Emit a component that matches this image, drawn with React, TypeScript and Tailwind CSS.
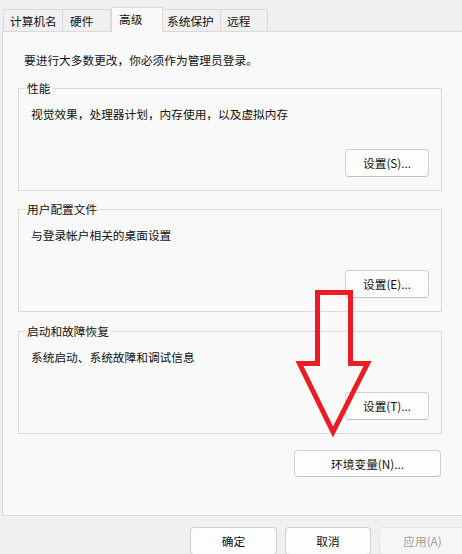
import React from 'react';

const tabs = [
  { label: '计算机名', cls: 'w-[60px] pl-[6px]' },
  { label: '硬件', cls: '-ml-px w-[49px] pl-[7px]' },
  { label: '高级', cls: 'w-[52px] pl-[7px]', active: true },
  { label: '系统保护', cls: '-ml-px w-[59px] pl-[4px]' },
  { label: '远程', cls: '-ml-px w-[48px] pl-[6px]' },
];

const groups = [
  { title: '性能', desc: '视觉效果，处理器计划，内存使用，以及虚拟内存', button: '设置(S)...', gap: 'mt-[12px]' },
  { title: '用户配置文件', desc: '与登录帐户相关的桌面设置', button: '设置(E)...', gap: 'mt-[10px]' },
  { title: '启动和故障恢复', desc: '系统启动、系统故障和调试信息', button: '设置(T)...', gap: 'mt-[11px]' },
];

const Button: React.FC<{ label: string; className?: string; disabled?: boolean }> = ({ label, className = '', disabled }) => (
  <button
    className={`shrink-0 rounded-[4px] border text-[11.7px] leading-[16px] ${
      disabled
        ? 'border-[#e3e3e3] bg-[#f6f6f6] text-[#9e9e9e]'
        : 'border-[#d0d0d0] border-b-[#c2c2c2] bg-[#fdfdfd] text-[#111]'
    } ${className}`}
  >
    {label}
  </button>
);

const App: React.FC = () => {
  return (
    <div className="relative h-[554px] w-[462px] overflow-hidden bg-[#f0f0f0] font-['Noto_Sans_CJK_SC',sans-serif] text-[11.7px] leading-[16px] text-[#111]">
      {/* tab strip */}
      <div className="flex h-[31px] items-end pl-[3px]">
        {tabs.map((t) =>
          t.active ? (
            <div
              key={t.label}
              className={`relative z-10 -mb-px h-[25px] border border-b-0 border-[#dadada] bg-[#f9f9f9] pt-[3px] ${t.cls}`}
            >
              {t.label}
            </div>
          ) : (
            <div
              key={t.label}
              className={`h-[22px] border border-b-0 border-[#dadada] bg-[#f0f0f0] pt-[3px] ${t.cls}`}
            >
              {t.label}
            </div>
          )
        )}
      </div>

      {/* tab panel */}
      <div className="ml-[2px] h-[485px] border border-r-0 border-[#dadada] bg-[#f9f9f9] pt-[20px]">
        <p className="ml-[21px]">要进行大多数更改，你必须作为管理员登录。</p>

        {groups.map((g) => (
          <fieldset
            key={g.title}
            className={`${g.gap} ml-[15px] w-[424px] border border-[#dcdcdc] px-[6px] pb-[13px]`}
          >
            <legend className="px-[2px] leading-[16px]">{g.title}</legend>
            <div className="px-[6px]">
              <p className="mt-[10px]">{g.desc}</p>
              <div className="mt-[27px] flex justify-end">
                <Button label={g.button} className="h-[28px] w-[84px]" />
              </div>
            </div>
          </fieldset>
        ))}

        <div className="ml-[15px] mt-[16px] flex w-[424px] justify-end pr-px">
          <Button label="环境变量(N)..." className="h-[27px] w-[147px]" />
        </div>
      </div>

      {/* dialog buttons */}
      <div className="mt-[11px] flex gap-[8px] pl-[190px]">
        <Button label="确定" className="h-[28px] w-[87px]" />
        <Button label="取消" className="h-[28px] w-[86px]" />
        <Button label="应用(A)" className="h-[28px] w-[87px]" disabled />
      </div>

      {/* red annotation arrow */}
      <svg className="pointer-events-none absolute left-0 top-0" width="462" height="554" viewBox="0 0 462 554">
        <polygon
          points="317.5,292.5 350.5,292.5 350.5,363.5 367.5,363.5 333,432 299.5,363.5 317.5,363.5"
          fill="none"
          stroke="#ed1c24"
          strokeWidth="5"
          strokeLinejoin="miter"
        />
      </svg>
    </div>
  );
};

export default App;
